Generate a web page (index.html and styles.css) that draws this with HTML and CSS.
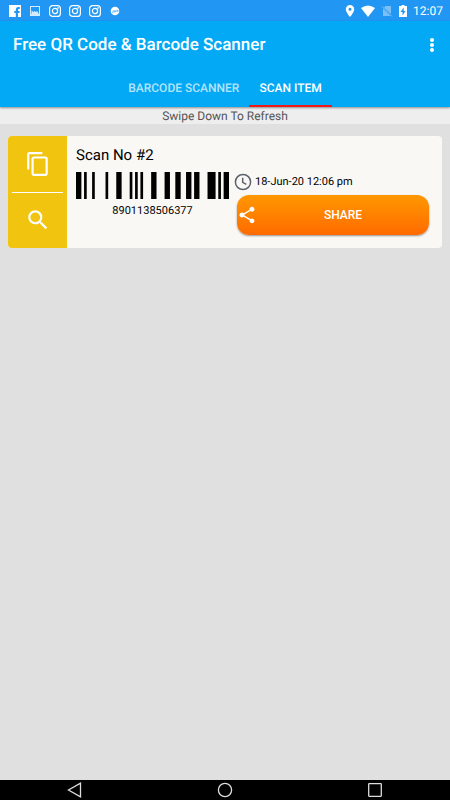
FILE: index.html
```html
<!DOCTYPE html>
<html lang="en">
<head>
<meta charset="utf-8">
<meta name="viewport" content="width=device-width, initial-scale=1">
<title>Free QR Code &amp; Barcode Scanner</title>
<link rel="stylesheet" href="styles.css">
</head>
<body>
<div class="status">
  <div class="notices">
    <svg class="s-icon" viewBox="0 0 12 12"><path fill="#fff" d="M0 0h12v12H9V8h1.600V6H9V5q0-1 1-1h.8V2H9Q6.800 2 6.800 4.500V6H5.300v2h1.500v4H0z"/></svg>
    <svg class="s-icon faded" viewBox="0 0 12 12"><path fill="#fff" fill-rule="evenodd" d="M1 1h10v10H1zM2 2v7h8V2z"/><path fill="#fff" d="M2.500 9V5.500l2 1.500 1-1 1.500 1 1-1 1.500 2v1z"/></svg>
    <svg class="s-icon" viewBox="0 0 12 12"><g fill="none" stroke="#fff" stroke-width="1.200"><rect x=".6" y=".6" width="10.800" height="10.800" rx="3"/><circle cx="6" cy="6" r="2.600"/></g><circle cx="9.100" cy="2.900" r=".8" fill="#fff"/></svg>
    <svg class="s-icon" viewBox="0 0 12 12"><g fill="none" stroke="#fff" stroke-width="1.200"><rect x=".6" y=".6" width="10.800" height="10.800" rx="3"/><circle cx="6" cy="6" r="2.600"/></g><circle cx="9.100" cy="2.900" r=".8" fill="#fff"/></svg>
    <svg class="s-icon" viewBox="0 0 12 12"><g fill="none" stroke="#fff" stroke-width="1.200"><rect x=".6" y=".6" width="10.800" height="10.800" rx="3"/><circle cx="6" cy="6" r="2.600"/></g><circle cx="9.100" cy="2.900" r=".8" fill="#fff"/></svg>
    <svg class="s-icon" viewBox="0 0 12 12"><circle cx="6" cy="6" r="4.300" fill="#fff"/><path d="M3 7.300h1.200V5.200M5.400 5.200v1.800h1.300V5.200M7.900 7V5.300h1.200V7" fill="none" stroke="#2196f3" stroke-width=".6"/></svg>
  </div>
  <div class="system">
    <svg class="pin" viewBox="0 0 10 12"><path fill="#fff" fill-rule="evenodd" d="M5 0a4.200 4.200 0 0 0-4.200 4.200C.8 7.300 5 12 5 12s4.200-4.700 4.200-7.800A4.200 4.200 0 0 0 5 0zm0 2.700a1.500 1.500 0 1 1 0 3 1.500 1.500 0 0 1 0-3z"/></svg>
    <svg class="wifi" viewBox="0 0 14 12"><path fill="#fff" d="M0 3q7-5 14 0L7 12z"/></svg>
    <svg class="nosim" viewBox="0 0 12 12"><path fill="#fff" d="M4.500 1H10v8L3 2.400zM2 3.500 9.500 11H2z"/><path stroke="#fff" d="m1 1.500 10 10"/></svg>
    <svg class="battery" viewBox="0 0 8 12"><path fill="#fff" d="M2.500 0h3v1H8v11H0V1h2.500z"/><path fill="#2196f3" d="M4.700 2.500 1.500 7h2v3.500L6.500 6H4.700z"/></svg>
    <span>12:07</span>
  </div>
</div>
<header class="appbar">
  <div class="toolbar">
    <h1>Free QR Code &amp; Barcode Scanner</h1>
    <button class="more" aria-label="More options"><svg viewBox="0 0 4 14"><g fill="#fff"><circle cx="2" cy="2" r="2"/><circle cx="2" cy="7" r="2"/><circle cx="2" cy="12" r="2"/></g></svg></button>
  </div>
  <nav class="tabs">
    <a href="#scanner">BARCODE SCANNER</a>
    <a href="#item" class="active" aria-current="page">SCAN ITEM</a>
  </nav>
</header>
<p class="hint">Swipe Down To Refresh</p>
<main>
  <article class="card">
    <div class="actions">
      <button aria-label="Copy"><svg viewBox="0 0 24 24"><path fill="#fff" d="M16 1H4c-1.100 0-2 .9-2 2v14h2V3h12V1zm3 4H8c-1.100 0-2 .9-2 2v14c0 1.100.9 2 2 2h11c1.100 0 2-.9 2-2V7c0-1.100-.9-2-2-2zm0 16H8V7h11v14z"/></svg></button>
      <button aria-label="Search"><svg viewBox="0 0 24 24"><path fill="#fff" d="M15.500 14h-.79l-.28-.27A6.470 6.470 0 0 0 16 9.500 6.500 6.500 0 1 0 9.500 16c1.610 0 3.090-.59 4.230-1.570l.27.28v.79l5 4.990L20.490 19l-4.990-5zm-6 0C7.010 14 5 11.990 5 9.500S7.010 5 9.500 5 14 7.010 14 9.500 11.990 14 9.500 14z"/></svg></button>
    </div>
    <div class="details">
      <h2>Scan No #2</h2>
      <div class="row">
        <figure>
          <svg class="barcode" viewBox="0 0 57 10" preserveAspectRatio="none" role="img" aria-label="Barcode"><path d="M0 0h2v10H0zM3 0h1v10H3zM6 0h1v10H6zM11 0h1v10h-1zM15 0h2v10h-2zM20 0h1v10h-1zM22 0h1v10h-1zM24 0h1v10h-1zM28 0h2v10h-2zM33 0h2v10h-2zM37 0h2v10h-2zM41 0h2v10h-2zM44 0h2v10h-2zM49 0h3v10h-3zM53 0h1v10h-1zM55 0h2v10h-2z"/></svg>
          <figcaption>8901138506377</figcaption>
        </figure>
        <div class="side">
          <div class="time"><svg viewBox="0 0 18 18"><g fill="none" stroke="#5b636b" stroke-width="1.500"><circle cx="9" cy="9" r="7.600"/><path d="M8.700 4.700v4.600l3.600 2"/></g></svg><time datetime="2020-06-18T12:06">18-Jun-20 12:06 pm</time></div>
          <button class="share"><svg viewBox="0 0 24 24"><path fill="#fff" d="M18 16.080c-.76 0-1.440.3-1.960.77L8.910 12.700c.05-.23.09-.46.09-.7s-.04-.47-.09-.7l7.050-4.110c.54.5 1.250.81 2.040.81 1.660 0 3-1.340 3-3s-1.340-3-3-3-3 1.340-3 3c0 .24.04.47.09.7L8.040 9.810C7.500 9.310 6.790 9 6 9c-1.660 0-3 1.340-3 3s1.340 3 3 3c.79 0 1.500-.31 2.040-.81l7.120 4.160c-.05.21-.08.43-.08.650 0 1.610 1.310 2.920 2.920 2.920s2.920-1.310 2.920-2.920-1.310-2.920-2.920-2.920z"/></svg><span>SHARE</span></button>
        </div>
      </div>
    </div>
  </article>
</main>
<footer class="navbar">
  <button aria-label="Back"><svg viewBox="0 0 16 16"><path d="M13.500 1.200v13.600L1.500 8z"/></svg></button>
  <button aria-label="Home"><svg viewBox="0 0 16 16"><circle cx="8" cy="8" r="6.600"/></svg></button>
  <button aria-label="Recent apps"><svg viewBox="0 0 16 16"><rect x="1.700" y="1.700" width="12.600" height="12.600" rx=".5"/></svg></button>
</footer>
</body>
</html>
```
FILE: styles.css
```css
* { box-sizing: border-box; }

body {
  margin: 0;
  min-height: 100vh;
  display: flex;
  flex-direction: column;
  background: #e0e0e0;
  color: #000;
  font-family: Roboto, "Liberation Sans", sans-serif;
  font-size: 12px;
  text-rendering: geometricPrecision;
}

h1, h2, p, figure { margin: 0; }
svg { display: block; }
button {
  border: 0;
  padding: 0;
  background: none;
  font: inherit;
  color: #fff;
}

.status {
  display: flex;
  align-items: center;
  justify-content: space-between;
  height: 21px;
  padding: 0 7px 0 9px;
  background: #2196f3;
  color: #fff;
}
.notices { display: flex; gap: 8px; }
.s-icon { width: 12px; height: 12px; }
.faded { opacity: 0.8; }
.system { display: flex; align-items: center; }
.system span { line-height: 20px; }
.pin { width: 10px; height: 12px; margin-right: 6px; }
.wifi { width: 14px; height: 12px; margin-right: 6px; }
.nosim { width: 12px; height: 12px; margin-right: 6px; opacity: 0.4; }
.battery { width: 8px; height: 12px; margin-right: 6px; }

.appbar {
  position: relative;
  background: #03a9f4;
  color: #fff;
  box-shadow: 0 1px 2px rgba(0, 0, 0, 0.4);
}
.toolbar {
  display: flex;
  align-items: center;
  justify-content: space-between;
  height: 48px;
  padding: 0 16px 0 13px;
}
.toolbar h1 { font-size: 17px; font-weight: 500; line-height: 20px; }
.more svg { width: 4px; height: 14px; }
.tabs { display: flex; justify-content: center; }
.tabs a {
  height: 38px;
  padding: 0 10px;
  border-bottom: 2px solid transparent;
  color: rgba(255, 255, 255, 0.7);
  font-weight: 500;
  line-height: 38px;
  text-decoration: none;
}
.tabs a.active { color: #fff; border-color: #f01818; }

.hint {
  padding-top: 1px;
  background: #eee;
  color: #555;
  line-height: 16px;
  text-align: center;
}

main { flex: 1; padding: 12px 8px; }
.card {
  display: flex;
  min-height: 112px;
  overflow: hidden;
  border-radius: 4px;
  background: #faf8f5;
}
.actions {
  display: flex;
  flex-direction: column;
  width: 59px;
  padding: 0 4px;
  background: #f1c40f;
}
.actions button { flex: 1; display: grid; place-items: center; }
.actions button + button { border-top: 1px solid #fff; }
.actions svg { width: 26px; height: 26px; }

.details { flex: 1; padding: 10px 13px 12px 9px; }
.details h2 { font-size: 15px; font-weight: 400; line-height: 18px; }
.row { display: flex; gap: 8px; margin-top: 8px; }
figure { flex: 153; }
.barcode { width: 100%; height: 27px; }
figcaption { margin-top: 4px; font-size: 11px; line-height: 16px; text-align: center; }
.side { flex: 192; }
.time {
  display: flex;
  align-items: center;
  gap: 3px;
  height: 19px;
  margin-left: -3px;
  font-size: 11px;
}
.time svg { width: 18px; height: 18px; }
.share {
  display: flex;
  align-items: center;
  width: 100%;
  height: 40px;
  margin-top: 4px;
  border-radius: 12px;
  background: linear-gradient(#ff9800, #ff6a00);
  box-shadow: 0 1px 2px rgba(0, 0, 0, 0.4);
  font-weight: 500;
}
.share svg { width: 20px; height: 20px; }
.share span { flex: 1; text-align: center; }

.navbar {
  display: flex;
  justify-content: space-around;
  height: 20px;
  background: #000;
}
.navbar button { flex: 1; display: grid; place-items: center; }
.navbar svg { width: 16px; height: 16px; fill: none; stroke: #ddd; stroke-width: 1.3; }
```
